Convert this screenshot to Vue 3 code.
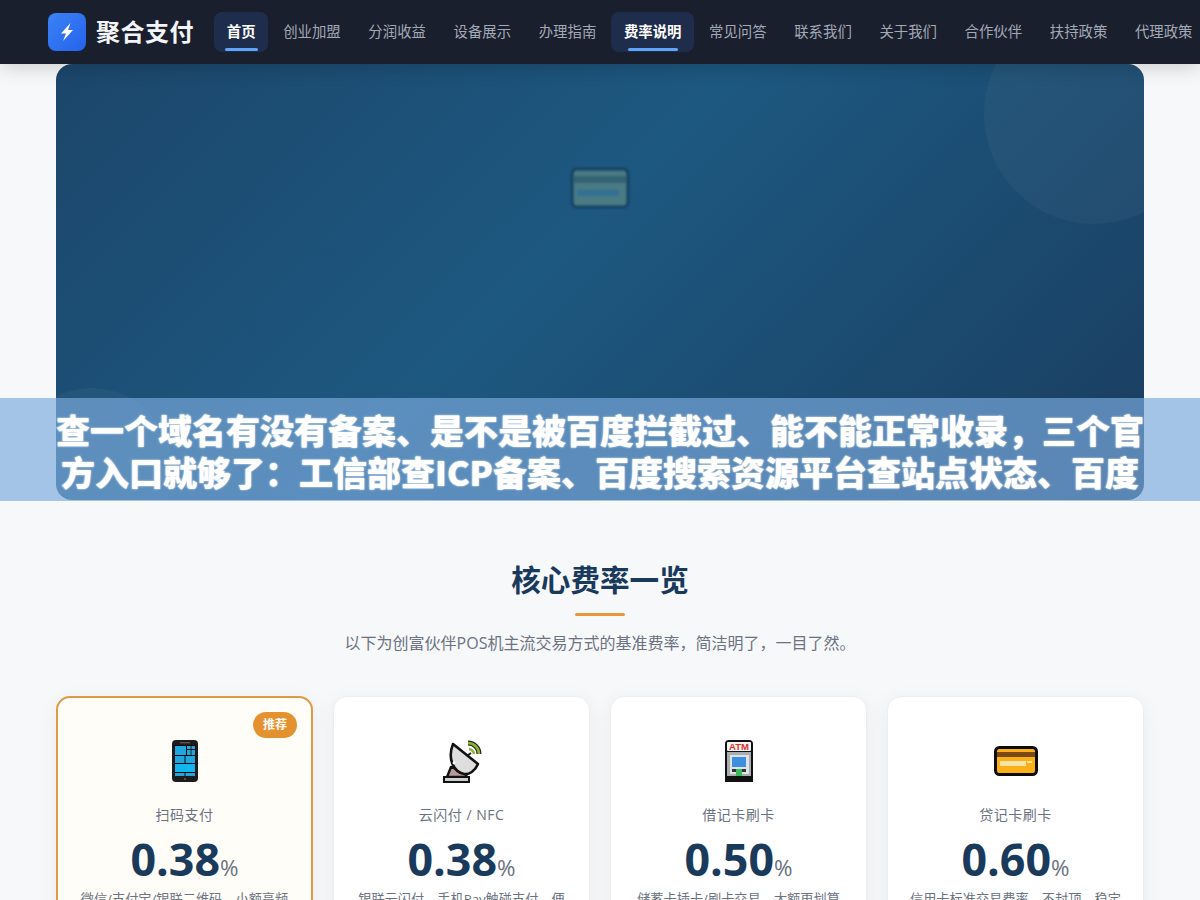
<template>
  <div class="page">
    <header class="topbar">
      <div class="brand">
        <span class="brand-logo">
          <svg width="16" height="20" viewBox="0 0 16 20">
            <path d="M11.5 1 2 11.5h5L4 19 14 8H9z" fill="#fff" />
          </svg>
        </span>
        <span class="brand-name">聚合支付</span>
      </div>
      <nav class="nav">
        <a v-for="item in navItems" :key="item.label" class="nav-item" :class="{ active: item.active }">{{ item.label }}</a>
      </nav>
    </header>

    <main class="content">
      <section class="hero">
        <span class="hero-circle circle-a"></span>
        <span class="hero-circle circle-b"></span>
        <svg class="hero-card" width="62" height="46" viewBox="0 0 62 46">
          <rect x="3" y="4" width="56" height="38" rx="5" fill="#5d8a86" stroke="#123a58" stroke-width="3" />
          <rect x="5" y="11" width="52" height="7" fill="#3f6a70" />
          <rect x="8" y="25" width="42" height="6" fill="#3f7a9e" />
        </svg>
      </section>

      <section class="rates">
        <h2 class="rates-title">核心费率一览</h2>
        <div class="rates-bar"></div>
        <p class="rates-sub">以下为创富伙伴POS机主流交易方式的基准费率，简洁明了，一目了然。</p>

        <div class="rate-grid">
          <div v-for="card in cards" :key="card.name" class="rate-card" :class="{ featured: card.featured }">
            <span v-if="card.featured" class="badge">推荐</span>
            <div class="rate-icon">
              <svg v-if="card.icon === 'phone'" width="28" height="44" viewBox="0 0 28 44">
                <rect x="1" y="1" width="26" height="42" rx="4" fill="#1c1c1c" />
                <rect x="9" y="3" width="10" height="1.4" fill="#555" />
                <rect x="3.5" y="6" width="21" height="31" fill="#0b0b0b" />
                <rect x="4" y="7" width="11" height="9" fill="#1fa8e0" />
                <rect x="16" y="7" width="3.6" height="3" fill="#1fa8e0" />
                <rect x="20.4" y="7" width="3.6" height="3" fill="#1fa8e0" />
                <rect x="16" y="11" width="3.6" height="5" fill="#1fa8e0" />
                <rect x="20.4" y="11" width="3.6" height="5" fill="#1fa8e0" />
                <rect x="4" y="17" width="9.5" height="7" fill="#1fa8e0" />
                <rect x="14.5" y="17" width="9.5" height="7" fill="#1fa8e0" />
                <rect x="4" y="25" width="20" height="8" fill="#12b5ee" />
                <rect x="4" y="34" width="9.5" height="3" fill="#1fa8e0" />
                <rect x="14.5" y="34" width="9.5" height="3" fill="#1fa8e0" />
                <circle cx="14" cy="40" r="1" fill="#7a5a50" />
              </svg>

              <svg v-else-if="card.icon === 'dish'" width="40" height="44" viewBox="0 0 40 44">
                <path d="M26 4a11 11 0 0 1 11 11" fill="none" stroke="#1c2a10" stroke-width="5" />
                <path d="M26 4a11 11 0 0 1 11 11" fill="none" stroke="#8fb03a" stroke-width="2.6" />
                <path d="M27 10a6 6 0 0 1 5 5" fill="none" stroke="#8fb03a" stroke-width="2.4" />
                <path d="M22 19 29 14" stroke="#1c1c1c" stroke-width="2" />
                <path d="M9 28 5 38h20l-3-6z" fill="#b99a9c" stroke="#111" stroke-width="2.4" stroke-linejoin="round" />
                <path d="M11 5 36 25C33 32 27 36 22 35 12 33 5 20 11 5z" fill="#dedede" stroke="#111" stroke-width="2.6" stroke-linejoin="round" />
                <circle cx="12" cy="24" r="1.4" fill="#fff" />
                <rect x="2" y="38" width="25" height="5" fill="#cfcfcf" stroke="#111" stroke-width="2" />
              </svg>

              <svg v-else-if="card.icon === 'atm'" width="30" height="44" viewBox="0 0 30 44">
                <path d="M1 43V5a4 4 0 0 1 4-4h20a4 4 0 0 1 4 4v38z" fill="#111" />
                <rect x="3" y="3" width="24" height="9" rx="1" fill="#f4f4f4" />
                <text x="15" y="10.8" class="atm-text" text-anchor="middle">ATM</text>
                <rect x="3" y="13" width="24" height="24" fill="#a9adb0" />
                <rect x="6" y="16" width="19" height="19" fill="#dfe3e6" />
                <rect x="8" y="18" width="14" height="10" fill="#3f8fe0" />
                <rect x="8" y="30" width="14" height="3" fill="#333" />
                <rect x="12" y="30" width="6" height="7" fill="#3dbb5a" />
              </svg>

              <svg v-else width="44" height="30" viewBox="0 0 44 30">
                <rect x="1.5" y="1.5" width="41" height="27" rx="4" fill="#fbb017" stroke="#0c0c0c" stroke-width="3" />
                <rect x="3" y="6" width="38" height="5" fill="#7a4a10" />
                <rect x="6" y="15" width="26" height="5" fill="#fbe3a8" />
                <rect x="33" y="15" width="5" height="2" fill="#fbe3a8" />
              </svg>
            </div>
            <div class="rate-name">{{ card.name }}</div>
            <div class="rate-value">{{ card.rate }}<span class="rate-unit">%</span></div>
            <p class="rate-desc">{{ card.desc }}</p>
          </div>
        </div>
      </section>
    </main>

    <div class="overlay">
      <p class="overlay-text">查一个域名有没有备案、是不是被百度拦截过、能不能正常收录，三个官方入口就够了：工信部查ICP备案、百度搜索资源平台查站点状态、百度</p>
    </div>
  </div>
</template>

<script setup>
const navItems = [
  { label: '首页', active: true },
  { label: '创业加盟' },
  { label: '分润收益' },
  { label: '设备展示' },
  { label: '办理指南' },
  { label: '费率说明', active: true },
  { label: '常见问答' },
  { label: '联系我们' },
  { label: '关于我们' },
  { label: '合作伙伴' },
  { label: '扶持政策' },
  { label: '代理政策' }
]

const cards = [
  { icon: 'phone', name: '扫码支付', rate: '0.38', desc: '微信/支付宝/银联二维码，小额高频交易首选', featured: true },
  { icon: 'dish', name: '云闪付 / NFC', rate: '0.38', desc: '银联云闪付、手机Pay触碰支付，便捷又安全' },
  { icon: 'atm', name: '借记卡刷卡', rate: '0.50', desc: '储蓄卡插卡/刷卡交易，大额更划算' },
  { icon: 'card', name: '贷记卡刷卡', rate: '0.60', desc: '信用卡标准交易费率，不封顶，稳定到账' }
]
</script>

<style>
html,
body {
  margin: 0;
  background: #f7f8fa;
}
</style>

<style scoped>
.page {
  position: relative;
  height: 900px;
  overflow: hidden;
  background: #f7f8fa;
  font-family: "Open Sans", "Noto Sans CJK SC", sans-serif;
}

.topbar {
  position: relative;
  z-index: 2;
  display: flex;
  align-items: center;
  height: 64px;
  padding-left: 48px;
  background: #1a1f2e;
  box-shadow: 0 2px 20px rgba(0, 0, 0, 0.2);
}

.brand {
  display: flex;
  flex-shrink: 0;
  align-items: center;
  gap: 10px;
}

.brand-logo {
  display: flex;
  align-items: center;
  justify-content: center;
  width: 38px;
  height: 38px;
  border-radius: 8px;
  background: linear-gradient(135deg, #3b82f6, #2563eb);
}

.brand-name {
  font-size: 24px;
  font-weight: 700;
  line-height: 32px;
  letter-spacing: 0.5px;
  white-space: nowrap;
  color: #f3f4f6;
}

.nav {
  display: flex;
  gap: 2px;
  margin-left: 20px;
}

.nav-item {
  position: relative;
  padding: 0 12.8px;
  height: 40px;
  line-height: 40px;
  border-radius: 8px;
  font-size: 14.4px;
  white-space: nowrap;
  color: #a3a9b5;
}

.nav-item.active {
  background: rgba(59, 130, 246, 0.15);
  color: #fff;
  font-weight: 700;
}

.nav-item.active::after {
  content: "";
  position: absolute;
  left: 20%;
  right: 20%;
  bottom: 1px;
  height: 3px;
  border-radius: 2px;
  background: #60a5fa;
}

.content {
  padding: 0 56px;
}

.hero {
  position: relative;
  display: flex;
  justify-content: center;
  height: 436px;
  overflow: hidden;
  border-radius: 16px;
  background: linear-gradient(135deg, #1c466b 0%, #1d5880 45%, #1a3d60 100%);
}

.hero-circle {
  position: absolute;
  border-radius: 50%;
  background: rgba(255, 255, 255, 0.035);
}

.circle-a {
  top: -60px;
  right: -60px;
  width: 220px;
  height: 220px;
}

.circle-b {
  left: -44px;
  bottom: -48px;
  width: 160px;
  height: 160px;
}

.hero-card {
  margin-top: 101px;
  filter: blur(1px);
  opacity: 0.7;
}

.rates {
  padding-top: 60px;
  text-align: center;
}

.rates-title {
  margin: 0;
  font-size: 29.6px;
  font-weight: 700;
  line-height: 40px;
  color: #1a3a5c;
}

.rates-bar {
  width: 50px;
  height: 3px;
  margin: 13px auto 0;
  border-radius: 2px;
  background: #e8963a;
}

.rates-sub {
  margin: 15px 0 0;
  font-size: 16px;
  line-height: 24px;
  color: #6b7280;
}

.rate-grid {
  display: grid;
  grid-template-columns: repeat(4, 1fr);
  gap: 20px;
  margin-top: 41px;
}

.rate-card {
  position: relative;
  box-sizing: border-box;
  height: 300px;
  padding: 41px 20px 0;
  border: 1px solid #eceef1;
  border-radius: 14px;
  background: #fff;
  box-shadow: 0 4px 20px rgba(0, 0, 0, 0.06);
}

.rate-card.featured {
  padding-top: 40px;
  border: 2px solid #e09a44;
  background: #fffdf8;
}

.badge {
  position: absolute;
  top: 14px;
  right: 14px;
  width: 44px;
  height: 26px;
  border-radius: 13px;
  background: #e49230;
  font-size: 12px;
  font-weight: 700;
  line-height: 26px;
  color: #fff;
}

.rate-icon {
  display: flex;
  align-items: center;
  justify-content: center;
  height: 46px;
}

.atm-text {
  font-family: "Liberation Sans", sans-serif;
  font-size: 9.5px;
  font-weight: 700;
  fill: #d9332b;
}

.rate-name {
  margin-top: 20px;
  font-size: 14px;
  line-height: 22px;
  letter-spacing: 0.5px;
  color: #6b7280;
}

.rate-value {
  margin-top: 7px;
  font-size: 44.8px;
  font-weight: 700;
  line-height: 52px;
  color: #1a3a5c;
}

.rate-unit {
  font-size: 22.4px;
  font-weight: 400;
  line-height: 1;
  color: #6b7280;
}

.rate-desc {
  margin: 4px 0 0;
  font-size: 13.2px;
  line-height: 20px;
  color: #6b7280;
}

.overlay {
  position: absolute;
  top: 398px;
  left: 0;
  right: 0;
  z-index: 1;
  box-sizing: border-box;
  height: 103px;
  padding: 11px 56px 0;
  background: rgba(122, 170, 220, 0.67);
}

.overlay-text {
  margin: 0;
  font-family: "Noto Sans CJK SC", sans-serif;
  font-size: 34px;
  font-weight: 900;
  line-height: 42px;
  text-align: center;
  color: #fff;
  word-break: break-all;
  text-shadow: 0 0 2px #fff;
}
</style>
